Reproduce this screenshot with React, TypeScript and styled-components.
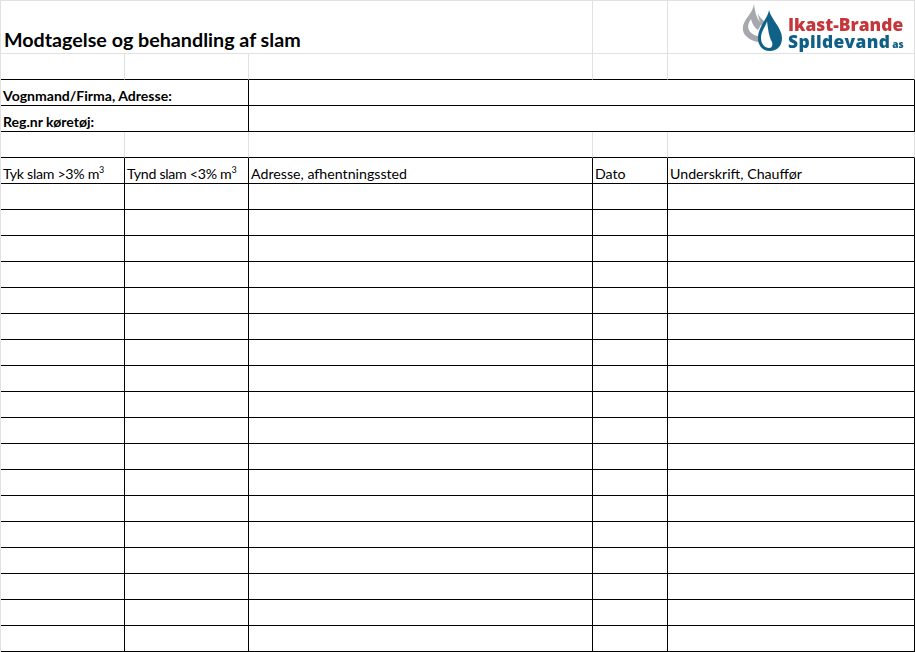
import React from "react";
import styled, { createGlobalStyle } from "styled-components";

const Global = createGlobalStyle`
  html, body { margin: 0; padding: 0; background: #fff; }
  #root { width: 915px; height: 652px; overflow: hidden; }
`;

const GRID = "#e1e1e1";
const INK = "#000";

const Sheet = styled.div`
  position: relative;
  box-sizing: border-box;
  width: 915px;
  height: 652px;
  background: #fff;
  border-top: 1px solid ${GRID};
  border-left: 1px solid ${GRID};
  display: grid;
  grid-template-columns: 124px 124px 344px 75px 247px;
  grid-template-rows: 53px repeat(23, 26px);
  font-family: "Lato", "Liberation Sans", sans-serif;
  color: #000;
`;

const Cell = styled.div<{ $span?: number; $right?: boolean; $bottom?: boolean }>`
  box-sizing: border-box;
  min-width: 0;
  grid-column: span ${(p) => p.$span ?? 1};
  border-right: 1px solid ${(p) => (p.$right ? INK : GRID)};
  border-bottom: 1px solid ${(p) => (p.$bottom ? INK : GRID)};
  display: flex;
  align-items: flex-end;
  white-space: nowrap;
`;

const TitleText = styled.h1`
  margin: 0 0 1px 3px;
  font-size: 19.7px;
  line-height: 24px;
  font-weight: 700;
`;

const LabelText = styled.strong`
  margin: 0 0 0 2px;
  font-size: 14.05px;
  line-height: 18px;
  font-weight: 700;
`;

const HeadText = styled.span<{ $tight?: boolean }>`
  margin-left: 2px;
  font-size: 14.2px;
  line-height: 18px;
  font-weight: 400;
  letter-spacing: ${(p) => (p.$tight ? "-0.3px" : "0")};
`;

const Sup = styled.sup`
  font-size: 9px;
  line-height: 0;
  vertical-align: 6px;
  margin-left: 0;
  letter-spacing: 0;
`;

const Logo = styled.div`
  position: absolute;
  left: 740px;
  top: 1px;
  width: 170px;
  height: 50px;
  filter: blur(0.35px);
`;

const Drops = styled.svg`
  position: absolute;
  left: 0;
  top: 0;
  width: 50px;
  height: 50px;
`;

const Wordmark = styled.div`
  position: absolute;
  left: 47px;
  top: 14px;
  font-family: "Open Sans", "Liberation Sans", sans-serif;
  font-weight: 800;
`;

const BrandLine = styled.div<{ $color: string; $spacing?: number }>`
  font-size: 17.4px;
  line-height: 17px;
  letter-spacing: ${(p) => p.$spacing ?? 0}px;
  color: ${(p) => p.$color};
  white-space: nowrap;
`;

const BrandSmall = styled.span`
  font-size: 10px;
  letter-spacing: 0;
  margin-left: 2px;
`;

const headers: { text: React.ReactNode; tight?: boolean }[] = [
  { text: <>Tyk slam &gt;3% m<Sup>3</Sup></>, tight: true },
  { text: <>Tynd slam &lt;3% m<Sup>3</Sup></>, tight: true },
  { text: "Adresse, afhentningssted" },
  { text: "Dato" },
  { text: "Underskrift, Chauffør" },
];

const columns = [0, 1, 2, 3, 4];
const bodyRows = Array.from({ length: 18 }, (_, i) => i);

export default function App() {
  return (
    <Sheet>
      <Global />
      <Cell $span={3}>
        <TitleText>Modtagelse og behandling af slam</TitleText>
      </Cell>
      <Cell />
      <Cell />

      {columns.map((c) => (
        <Cell key={`top-gap-${c}`} $bottom />
      ))}

      <Cell $span={2} $right $bottom>
        <LabelText>Vognmand/Firma, Adresse:</LabelText>
      </Cell>
      <Cell $span={3} $right $bottom />
      <Cell $span={2} $right $bottom>
        <LabelText>Reg.nr køretøj:</LabelText>
      </Cell>
      <Cell $span={3} $right $bottom />

      {columns.map((c) => (
        <Cell key={`mid-gap-${c}`} $bottom />
      ))}

      {headers.map((h, i) => (
        <Cell key={`head-${i}`} $right $bottom>
          <HeadText $tight={h.tight}>{h.text}</HeadText>
        </Cell>
      ))}

      {bodyRows.map((r) =>
        columns.map((c) => <Cell key={`body-${r}-${c}`} $right $bottom />)
      )}

      <Logo>
        <Drops viewBox="740 1 50 50">
          <path
            d="M753 3 C752 10 747 15 744 20 C741 25 741 31 745 35 C749 39 754 41 759 41 L760 36 C755 35 750 33 748 29 C746 25 748 21 750 18 C751 23 754 27 757 29 L761 22 C757 21 754 12 753 3 Z"
            fill="#a5a8ad"
          />
          <path d="M757 12 C758 16 761 18 764 21 L761 25 C759 21 757 17 757 12 Z" fill="#a5a8ad" />
          <path
            fillRule="evenodd"
            d="M768 9 C767 17 757 26 757 37 C757 45 762 50 769 50 C776 50 781 45 781 37 C781 27 770 18 768 9 Z M766 20 C765 25 760 30 760 37 C760 43 764 47 768 47 C771 47 772 44 771 41 C768 36 767 28 766 20 Z"
            fill="#0f6188"
          />
        </Drops>
        <Wordmark>
          <BrandLine $color="#c5363b">Ikast-Brande</BrandLine>
          <BrandLine $color="#0f5f86" $spacing={0.35}>
            Spildevand<BrandSmall>as</BrandSmall>
          </BrandLine>
        </Wordmark>
      </Logo>
    </Sheet>
  );
}
